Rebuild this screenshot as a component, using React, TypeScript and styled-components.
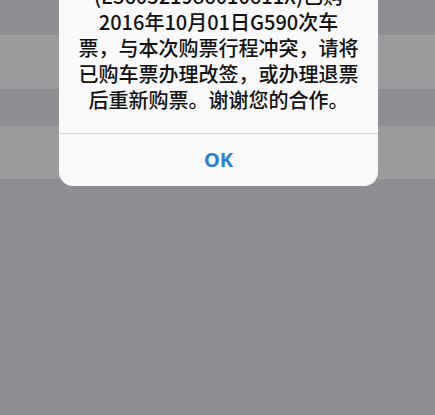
import React from "react";
import styled, { createGlobalStyle } from "styled-components";

const Global = createGlobalStyle`
  html, body { margin: 0; padding: 0; }
  body { background: #8f8e93; font-family: "Noto Sans CJK SC", "Noto Sans", sans-serif; }
`;

const Screen = styled.div`
  position: relative;
  width: 435px;
  height: 415px;
  overflow: hidden;
  display: flex;
  flex-direction: column;
  background: #8f8e93;
`;

const Band = styled.div<{ $h: number; $light?: boolean }>`
  flex: 0 0 ${(p) => p.$h}px;
  background: ${(p) => (p.$light ? "#9b9b9d" : "#8f8e93")};
  border-bottom: 1px solid ${(p) => (p.$light ? "#8a898e" : "transparent")};
  box-sizing: border-box;
`;

const Filler = styled.div`
  flex: 1;
  background: #8f8e93;
`;

const Dialog = styled.div`
  position: absolute;
  left: 59px;
  top: -17px;
  width: 319px;
  background: #f9f9f9;
  border-radius: 0 0 14px 14px;
  display: flex;
  flex-direction: column;
  overflow: hidden;
`;

const Message = styled.div`
  padding: 0 10px 20px;
  display: flex;
  flex-direction: column;
  align-items: center;
  color: #111;
  font-size: 20px;
  line-height: 26px;
  font-weight: 500;
`;

const Line = styled.span`
  white-space: nowrap;
  height: 26px;
`;

const Actions = styled.div`
  border-top: 1px solid #d3d3d5;
  height: 52px;
  display: flex;
  align-items: center;
  justify-content: center;
`;

const OkButton = styled.button`
  border: none;
  background: transparent;
  color: #2f7fd1;
  font-family: "Noto Sans", "Liberation Sans", sans-serif;
  font-size: 20px;
  font-weight: 700;
  padding: 0;
  margin-top: -1px;
  cursor: pointer;
`;

const lines = [
  "(E360521986010611X)已购",
  "2016年10月01日G590次车",
  "票，与本次购票行程冲突，请将",
  "已购车票办理改签，或办理退票",
  "后重新购票。谢谢您的合作。",
];

export default function App() {
  return (
    <>
      <Global />
      <Screen>
        <Band $h={35} />
        <Band $h={55} $light />
        <Band $h={36} />
        <Band $h={54} $light />
        <Filler />
        <Dialog>
          <Message>
            {lines.map((l) => (
              <Line key={l}>{l}</Line>
            ))}
          </Message>
          <Actions>
            <OkButton>OK</OkButton>
          </Actions>
        </Dialog>
      </Screen>
    </>
  );
}
